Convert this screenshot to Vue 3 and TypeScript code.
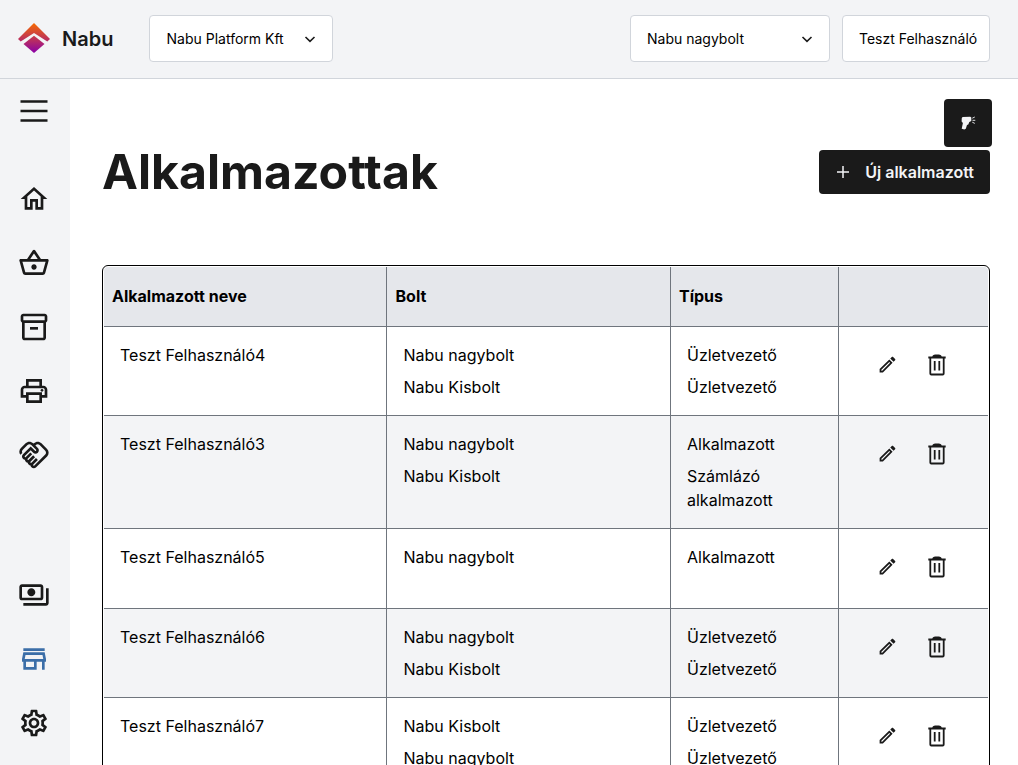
<script setup lang="ts">
interface NavItem {
  name: string
  paths: string[]
  active?: boolean
}

interface Assignment {
  shop: string
  role: string
}

interface Employee {
  name: string
  assignments: Assignment[]
}

const mainNav: NavItem[] = [
  {
    name: 'home',
    paths: ['M12 5.69l5 4.5V18h-2v-6H9v6H7v-7.81l5-4.5M12 3L2 12h3v8h6v-6h2v6h6v-8h3L12 3z'],
  },
  {
    name: 'basket',
    paths: [
      'M22 9h-4.79l-4.38-6.56c-.19-.28-.51-.42-.83-.42s-.64.14-.83.43L6.79 9H2c-.55 0-1 .45-1 1 0 .09.01.18.04.27l2.54 9.27c.23.84 1 1.46 1.92 1.46h13c.92 0 1.69-.62 1.93-1.46l2.54-9.27L23 10c0-.55-.45-1-1-1zM12 4.8L14.8 9H9.2L12 4.8zM18.5 19l-12.99.01L3.31 11H20.7l-2.2 8zM12 13c-1.1 0-2 .9-2 2s.9 2 2 2 2-.9 2-2-.9-2-2-2z',
    ],
  },
  {
    name: 'inventory',
    paths: [
      'M20 2H4c-1 0-2 .9-2 2v3.01c0 .72.43 1.34 1 1.69V20c0 1.1 1.1 2 2 2h14c.9 0 2-.9 2-2V8.7c.57-.35 1-.97 1-1.69V4c0-1.1-1-2-2-2zm-1 18H5V9h14v11zm1-13H4V4h16v3z',
      'M9 12h6v2H9z',
    ],
  },
  {
    name: 'print',
    paths: [
      'M19 8h-1V3H6v5H5c-1.66 0-3 1.34-3 3v6h4v4h12v-4h4v-6c0-1.66-1.34-3-3-3zM8 5h8v3H8V5zm8 12v2H8v-4h8v2zm2-2v-2H6v2H4v-4c0-.55.45-1 1-1h14c.55 0 1 .45 1 1v4h-2z',
      'M18 10.5a1 1 0 1 0 0 2 1 1 0 0 0 0-2z',
    ],
  },
  {
    name: 'partners',
    paths: [
      'M12.22 19.85c-.18.18-.5.21-.71 0-.18-.18-.21-.5 0-.71l3.39-3.39-1.41-1.41-3.39 3.39c-.19.2-.51.19-.71 0-.21-.21-.18-.53 0-.71l3.39-3.39-1.41-1.41-3.39 3.39c-.18.18-.5.21-.71 0-.19-.19-.19-.51 0-.71l3.39-3.39-1.42-1.41-3.39 3.39c-.18.18-.5.21-.71 0-.19-.2-.19-.51 0-.71L9.52 8.4l1.87 1.86c.95.95 2.59.94 3.54 0 .98-.98.98-2.56 0-3.54l-1.86-1.86.28-.28c.78-.78 2.05-.78 2.83 0l4.24 4.24c.78.78.78 2.05 0 2.83l-8.2 8.2zm9.61-6.78c1.56-1.56 1.56-4.09 0-5.66l-4.24-4.24c-1.56-1.56-4.09-1.56-5.66 0l-.28.28-.28-.28c-1.56-1.56-4.09-1.56-5.66 0L2.17 6.71c-1.42 1.42-1.55 3.63-.4 5.19l1.45-1.45c-.39-.75-.26-1.7.37-2.33l3.54-3.54c.78-.78 2.05-.78 2.83 0l3.56 3.56c.18.18.21.5 0 .71-.21.21-.53.18-.71 0L9.52 5.57l-5.8 5.79c-.98.97-.98 2.56 0 3.54.39.39.89.63 1.42.7.07.52.3 1.02.7 1.42.4.4.9.63 1.42.7.07.52.3 1.02.7 1.42.4.4.9.63 1.42.7.07.54.31 1.03.7 1.42.47.47 1.1.73 1.77.73.67 0 1.3-.26 1.77-.73l8.21-8.19z',
    ],
  },
]

const bottomNav: NavItem[] = [
  {
    name: 'payments',
    paths: [
      'M19 14V6c0-1.1-.9-2-2-2H3c-1.1 0-2 .9-2 2v8c0 1.1.9 2 2 2h14c1.1 0 2-.9 2-2zm-2 0H3V6h14v8zm-7-7c-1.66 0-3 1.34-3 3s1.34 3 3 3 3-1.34 3-3-1.34-3-3-3zm13 0v11c0 1.1-.9 2-2 2H4v-2h17V7h2z',
    ],
  },
  {
    name: 'store',
    active: true,
    paths: [
      'M18.36 9l.6 3H5.04l.6-3h12.72M20 4H4v2h16V4zm0 3H4l-1 5v2h1v6h10v-6h4v6h2v-6h1v-2l-1-5zM6 18v-4h6v4H6z',
    ],
  },
  {
    name: 'settings',
    paths: [
      'M19.43 12.98c.04-.32.07-.64.07-.98 0-.34-.03-.66-.07-.98l2.11-1.65c.19-.15.24-.42.12-.64l-2-3.46c-.09-.16-.26-.25-.44-.25-.06 0-.12.01-.17.03l-2.49 1c-.52-.4-1.08-.73-1.69-.98l-.38-2.65C14.46 2.18 14.25 2 14 2h-4c-.25 0-.46.18-.49.42l-.38 2.65c-.61.25-1.17.59-1.69.98l-2.49-1c-.06-.02-.12-.03-.18-.03-.17 0-.34.09-.43.25l-2 3.46c-.13.22-.07.49.12.64l2.11 1.65c-.04.32-.07.65-.07.98 0 .33.03.66.07.98l-2.11 1.65c-.19.15-.24.42-.12.64l2 3.46c.09.16.26.25.44.25.06 0 .12-.01.17-.03l2.49-1c.52.4 1.08.73 1.69.98l.38 2.65c.03.24.24.42.49.42h4c.25 0 .46-.18.49-.42l.38-2.65c.61-.25 1.17-.59 1.69-.98l2.49 1c.06.02.12.03.18.03.17 0 .34-.09.43-.25l2-3.46c.12-.22.07-.49-.12-.64l-2.11-1.65zm-1.98-1.71c.04.31.05.52.05.73 0 .21-.02.43-.05.73l-.14 1.13.89.7 1.08.84-.7 1.21-1.27-.51-1.04-.42-.9.68c-.43.32-.84.56-1.25.73l-1.06.43-.16 1.13-.2 1.35h-1.4l-.19-1.35-.16-1.13-1.06-.43c-.43-.18-.83-.41-1.23-.71l-.91-.7-1.06.43-1.27.51-.7-1.21 1.08-.84.89-.7-.14-1.13c-.03-.31-.05-.54-.05-.74s.02-.43.05-.73l.14-1.13-.89-.7-1.08-.84.7-1.21 1.27.51 1.04.42.9-.68c.43-.32.84-.56 1.25-.73l1.06-.43.16-1.13.2-1.35h1.39l.19 1.35.16 1.13 1.06.43c.43.18.83.41 1.23.71l.91.7 1.06-.43 1.27-.51.7 1.21-1.07.85-.89.7.14 1.13zM12 8c-2.21 0-4 1.79-4 4s1.79 4 4 4 4-1.79 4-4-1.79-4-4-4zm0 6c-1.1 0-2-.9-2-2s.9-2 2-2 2 .9 2 2-.9 2-2 2z',
    ],
  },
]

const columns: string[] = ['Alkalmazott neve', 'Bolt', 'Típus', '']

const employees: Employee[] = [
  {
    name: 'Teszt Felhasználó4',
    assignments: [
      { shop: 'Nabu nagybolt', role: 'Üzletvezető' },
      { shop: 'Nabu Kisbolt', role: 'Üzletvezető' },
    ],
  },
  {
    name: 'Teszt Felhasználó3',
    assignments: [
      { shop: 'Nabu nagybolt', role: 'Alkalmazott' },
      { shop: 'Nabu Kisbolt', role: 'Számlázó alkalmazott' },
    ],
  },
  {
    name: 'Teszt Felhasználó5',
    assignments: [{ shop: 'Nabu nagybolt', role: 'Alkalmazott' }],
  },
  {
    name: 'Teszt Felhasználó6',
    assignments: [
      { shop: 'Nabu nagybolt', role: 'Üzletvezető' },
      { shop: 'Nabu Kisbolt', role: 'Üzletvezető' },
    ],
  },
  {
    name: 'Teszt Felhasználó7',
    assignments: [
      { shop: 'Nabu Kisbolt', role: 'Üzletvezető' },
      { shop: 'Nabu nagybolt', role: 'Üzletvezető' },
    ],
  },
]
</script>

<template>
  <div class="app">
    <header class="topbar">
      <div class="brand">
        <svg class="logo" viewBox="0 0 32 30">
          <defs>
            <linearGradient id="logo-fill" gradientUnits="userSpaceOnUse" x1="0" y1="0" x2="0" y2="30">
              <stop offset="0" stop-color="#f76b00" />
              <stop offset="1" stop-color="#8a00a8" />
            </linearGradient>
          </defs>
          <path fill="url(#logo-fill)" d="M16 0L32 16L29.3 18.5L16 10L2.700 18.500L0 16Z" />
          <path fill="url(#logo-fill)" d="M16 12.700L26.500 21L16 30L5.500 21Z" />
        </svg>
        <span class="brand-name">Nabu</span>
      </div>
      <button class="select company">
        <span>Nabu Platform Kft</span>
        <svg class="chevron" viewBox="0 0 12 12"><path d="M1.500 4l4.500 4.300 4.500-4.300" /></svg>
      </button>
      <button class="select shop">
        <span>Nabu nagybolt</span>
        <svg class="chevron" viewBox="0 0 12 12"><path d="M1.500 4l4.500 4.300 4.500-4.300" /></svg>
      </button>
      <button class="select user">Teszt Felhasználó</button>
    </header>

    <div class="body">
      <aside class="sidebar">
        <svg class="menu-icon" viewBox="0 0 32 32"><path d="M2.500 6.500h27M2.500 16h27M2.500 25.500h27" /></svg>
        <nav class="nav">
          <svg v-for="item in mainNav" :key="item.name" class="nav-icon" viewBox="0 0 24 24">
            <path v-for="p in item.paths" :key="p" :d="p" />
          </svg>
        </nav>
        <nav class="nav nav-bottom">
          <svg
            v-for="item in bottomNav"
            :key="item.name"
            class="nav-icon"
            :class="{ active: item.active }"
            viewBox="0 0 24 24"
          >
            <path v-for="p in item.paths" :key="p" :d="p" />
          </svg>
        </nav>
      </aside>

      <main class="content">
        <button class="scan">
          <svg viewBox="0 0 16 16">
            <path
              class="gun"
              d="M2.600 2.100L10.300 1.700L11.300 2.600V6L9.300 6.900L8.300 9.500L7 10L5.800 13.800L4.300 14.500L1.700 13.700L2.900 8L1.600 6.500L1.800 3Z"
            />
            <path class="rays" d="M12.300 3.200l2.500-1.200M12.500 5.300h2.800M12.300 7.200l2.500 1.200" />
          </svg>
        </button>
        <div class="title-row">
          <h1>Alkalmazottak</h1>
          <button class="new-button">
            <svg viewBox="0 0 12 12"><path d="M6 0v12M0 6h12" /></svg>
            <span>Új alkalmazott</span>
          </button>
        </div>

        <div class="table">
          <div class="inner">
            <div class="row head">
              <div v-for="(c, i) in columns" :key="i" class="cell">{{ c }}</div>
            </div>
            <div v-for="e in employees" :key="e.name" class="row">
              <div class="cell">{{ e.name }}</div>
              <div class="cell">
                <div v-for="(a, i) in e.assignments" :key="i" class="line">{{ a.shop }}</div>
              </div>
              <div class="cell">
                <div v-for="(a, i) in e.assignments" :key="i" class="line">{{ a.role }}</div>
              </div>
              <div class="cell actions">
                <svg class="edit" viewBox="0 0 24 24">
                  <path
                    d="M14.06 9.02l.92.92L5.92 19H5v-.92l9.06-9.06M17.66 3c-.25 0-.51.1-.7.29l-1.83 1.83 3.75 3.75 1.83-1.83c.39-.39.39-1.02 0-1.41l-2.34-2.34c-.2-.2-.45-.29-.71-.29zm-3.6 3.19L3 17.25V21h3.75L17.81 9.94l-3.75-3.75z"
                  />
                </svg>
                <svg class="trash" viewBox="0 0 20 22">
                  <path d="M1.300 3.500h17.400M3.300 3.500v16q0 1 1 1h11.400q1 0 1-1V3.500M6 3.500q.3-2 2.300-2h3.400q2 0 2.300 2M7.700 7v9.500M12.300 7v9.500" />
                </svg>
              </div>
            </div>
          </div>
        </div>
      </main>
    </div>
  </div>
</template>

<style>
body {
  margin: 0;
  overflow: hidden;
}
</style>

<style scoped>
.app {
  box-sizing: border-box;
  height: 765px;
  display: flex;
  flex-direction: column;
  overflow: hidden;
  background: #fff;
  color: #000;
  font-family: Inter, 'Liberation Sans', sans-serif;
  font-size: 16px;
  line-height: 24px;
}
.app * {
  box-sizing: border-box;
}
svg {
  display: block;
  flex: none;
}
button {
  font: inherit;
  margin: 0;
}
.topbar {
  flex: none;
  height: 79px;
  display: flex;
  align-items: center;
  padding: 0 28px 1px 18px;
  background: #f3f4f6;
  border-bottom: 1px solid #d1d5db;
}
.brand {
  display: flex;
  align-items: center;
  width: 131px;
  gap: 12px;
}
.logo {
  width: 32px;
  height: 30px;
  margin-bottom: 2px;
}
.brand-name {
  font-size: 20px;
  font-weight: 600;
  line-height: 28px;
  color: #1a1a1a;
}
.select {
  height: 47px;
  display: flex;
  align-items: center;
  justify-content: space-between;
  padding: 0 16px;
  background: #fff;
  border: 1px solid #d1d5db;
  border-radius: 4px;
  color: #000;
  font-size: 14px;
  line-height: 20px;
  white-space: nowrap;
}
.company {
  width: 184px;
  padding-left: 16.500px;
}
.shop {
  width: 200px;
  margin-left: auto;
  margin-right: 12px;
}
.user {
  width: 148px;
  padding-right: 0;
}
.chevron {
  width: 12px;
  height: 12px;
  fill: none;
  stroke: #1a1a1a;
  stroke-width: 1.600;
}
.body {
  flex: 1;
  min-height: 0;
  display: flex;
}
.sidebar {
  flex: none;
  width: 70px;
  padding: 16px 0 26px 18px;
  display: flex;
  flex-direction: column;
  background: #f3f4f6;
}
.menu-icon {
  width: 32px;
  height: 32px;
  fill: none;
  stroke: #1a1a1a;
  stroke-width: 2.700;
}
.nav {
  display: flex;
  flex-direction: column;
  gap: 32px;
  margin-top: 56px;
}
.nav-bottom {
  margin-top: auto;
}
.nav-icon {
  width: 32px;
  height: 32px;
  fill: #1a1a1a;
}
.nav-icon.active {
  fill: #3b6ea8;
}
.content {
  flex: 1;
  min-width: 0;
  padding: 20px 28px 0 32px;
}
.scan {
  display: flex;
  align-items: center;
  justify-content: center;
  width: 48px;
  height: 48px;
  padding: 0;
  margin: 0 -2px 3px auto;
  border: 0;
  border-radius: 4px;
  background: #1a1a1a;
}
.scan svg {
  width: 16px;
  height: 16px;
}
.gun {
  fill: #f3f4f6;
}
.rays {
  fill: none;
  stroke: #f3f4f6;
  stroke-width: 0.900;
}
.title-row {
  display: flex;
  align-items: center;
  justify-content: space-between;
  height: 44px;
  margin-bottom: 71px;
}
h1 {
  margin: 0;
  font-size: 48.200px;
  line-height: 48px;
  font-weight: 700;
  color: #1a1a1a;
}
.new-button {
  display: flex;
  align-items: center;
  justify-content: space-between;
  width: 171px;
  height: 44px;
  padding: 0 16px 0 18px;
  border: 0;
  border-radius: 4px;
  background: #1a1a1a;
  color: #f3f4f6;
  font-weight: 600;
  white-space: nowrap;
}
.new-button svg {
  width: 12px;
  height: 12px;
  fill: none;
  stroke: #f3f4f6;
  stroke-width: 1.500;
}
.table {
  border: 1px solid #000;
  border-radius: 6px;
  padding: 1px;
}
.inner {
  border-radius: 4px;
  overflow: hidden;
}
.row {
  display: grid;
  grid-template-columns: 283px 284px 168px 149px;
  border-bottom: 1px solid #6f757d;
}
.row:nth-child(odd) {
  background: #f3f4f6;
}
.row.head {
  height: 60px;
  background: #e5e7eb;
  font-weight: 700;
}
.cell {
  padding: 16px;
  border-right: 1px solid #6f757d;
}
.cell:last-child {
  border-right: 0;
}
.cell:nth-child(2) {
  padding-left: 16.500px;
}
.head .cell {
  display: flex;
  align-items: center;
  padding: 0 8px 1px;
}
.head .cell:nth-child(2) {
  padding-left: 8.500px;
}
.line + .line {
  margin-top: 8px;
}
.actions {
  height: 79px;
  padding: 0 41px 4px 37.500px;
  display: flex;
  align-items: center;
  justify-content: space-between;
}
.row:nth-child(odd) {
  background: #f3f4f6;
}
.row.head {
  background: #e5e7eb;
}
.edit {
  width: 21px;
  height: 21px;
  fill: #1a1a1a;
}
.trash {
  width: 20px;
  height: 22px;
  fill: none;
  stroke: #1a1a1a;
  stroke-width: 1.800;
}
</style>
